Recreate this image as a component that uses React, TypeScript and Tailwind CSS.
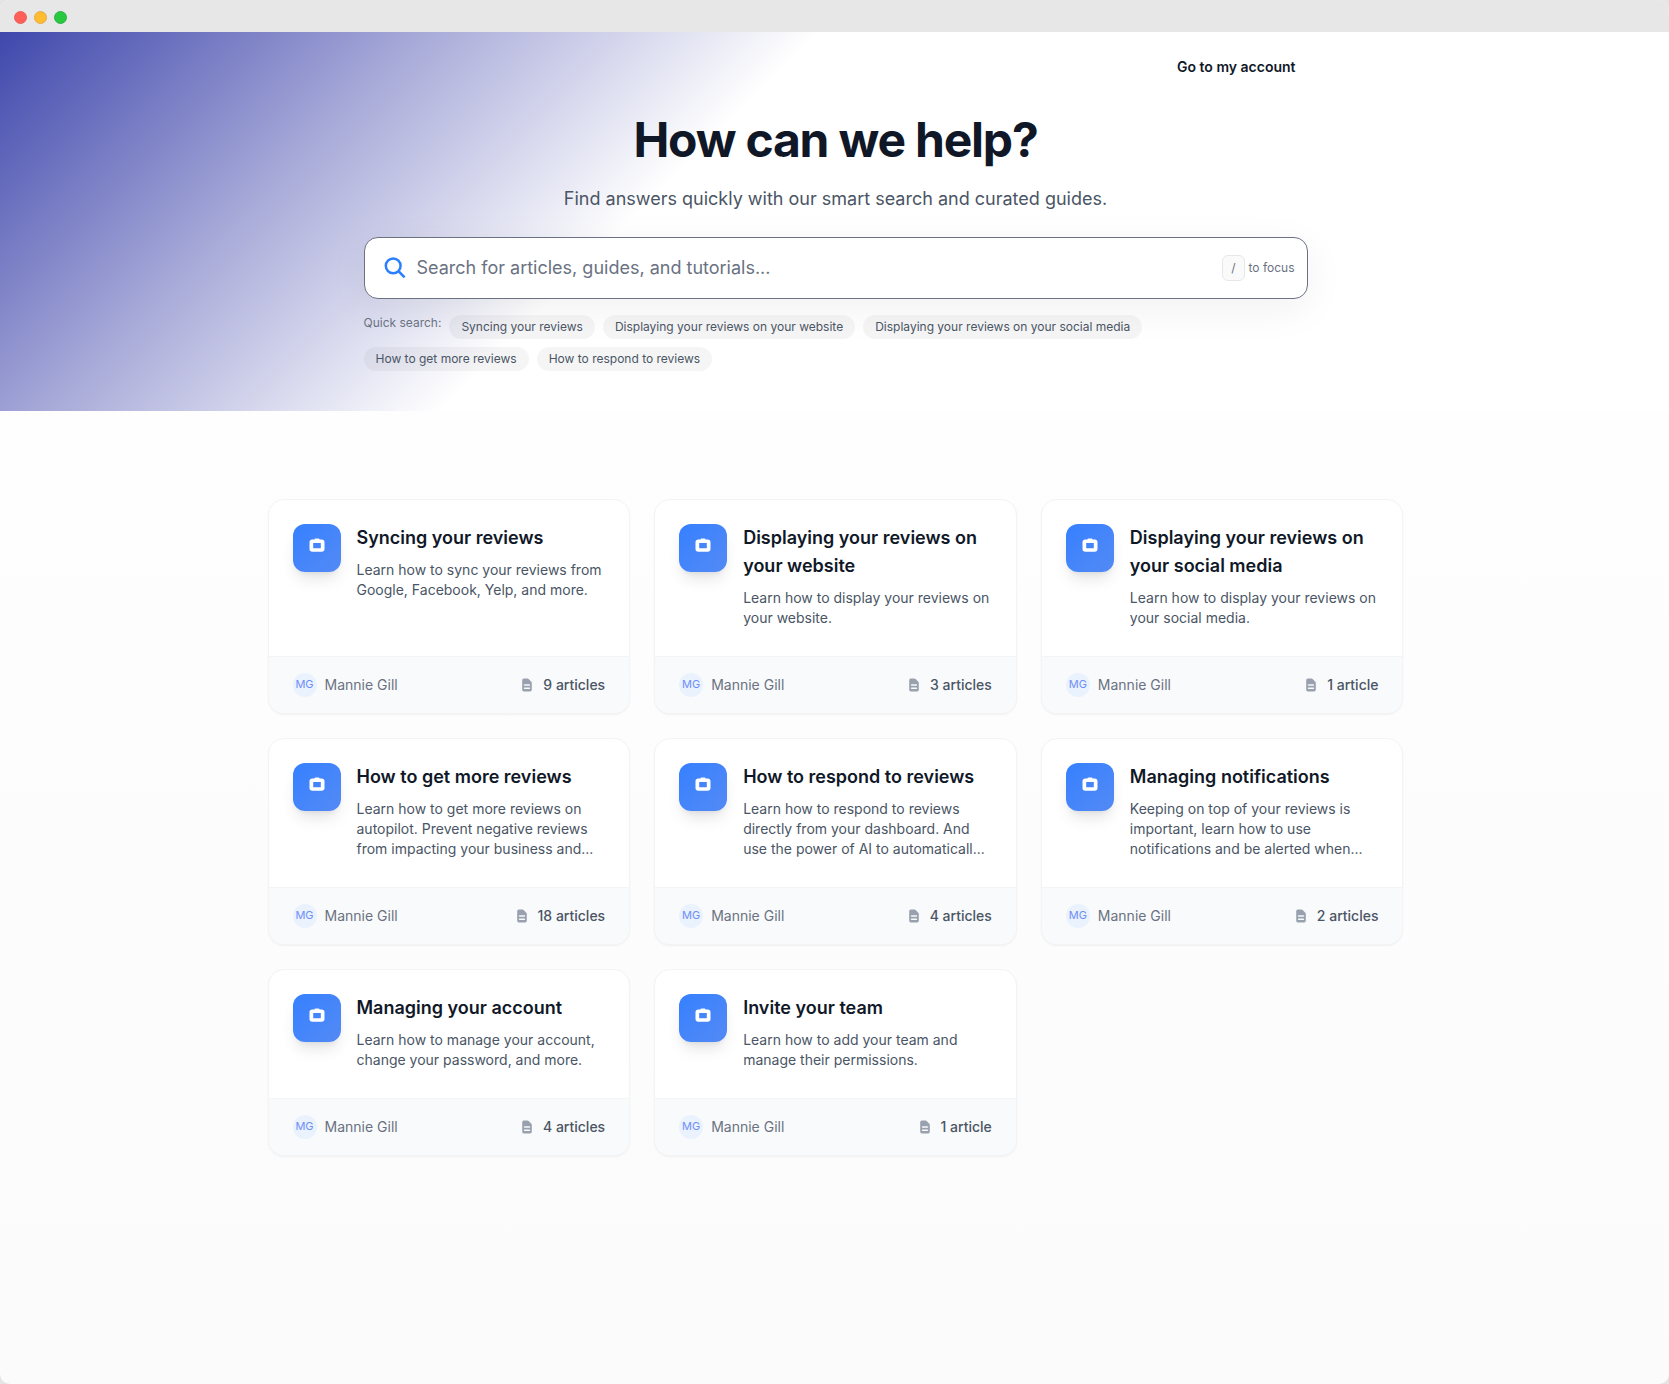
type Collection = {
  title: string
  description: string
  articles: number
}

const quickSearches = [
  "Syncing your reviews",
  "Displaying your reviews on your website",
  "Displaying your reviews on your social media",
  "How to get more reviews",
  "How to respond to reviews",
]

const collections: Collection[] = [
  {
    title: "Syncing your reviews",
    description: "Learn how to sync your reviews from Google, Facebook, Yelp, and more.",
    articles: 9,
  },
  {
    title: "Displaying your reviews on your website",
    description: "Learn how to display your reviews on your website.",
    articles: 3,
  },
  {
    title: "Displaying your reviews on your social media",
    description: "Learn how to display your reviews on your social media.",
    articles: 1,
  },
  {
    title: "How to get more reviews",
    description:
      "Learn how to get more reviews on autopilot. Prevent negative reviews from impacting your business and...",
    articles: 18,
  },
  {
    title: "How to respond to reviews",
    description:
      "Learn how to respond to reviews directly from your dashboard. And use the power of AI to automaticall...",
    articles: 4,
  },
  {
    title: "Managing notifications",
    description:
      "Keeping on top of your reviews is important, learn how to use notifications and be alerted when...",
    articles: 2,
  },
  {
    title: "Managing your account",
    description: "Learn how to manage your account, change your password, and more.",
    articles: 4,
  },
  {
    title: "Invite your team",
    description: "Learn how to add your team and manage their permissions.",
    articles: 1,
  },
]

function SearchIcon() {
  return (
    <svg
      viewBox="0 0 24 24"
      className="size-6 shrink-0 text-[#2b7fff]"
      fill="none"
      stroke="currentColor"
      strokeWidth="2.5"
      aria-hidden="true"
    >
      <circle cx="10.2" cy="9.8" r="7.4" />
      <path d="M15.3 15l6.3 6.3" />
    </svg>
  )
}

function CollectionIcon() {
  return (
    <svg viewBox="0 0 16 14" className="h-3.5 w-4 text-white" fill="currentColor" aria-hidden="true">
      <path
        fillRule="evenodd"
        d="M5.4 1.5C5.5.8 5.9.4 6.6.4h2.8c.7 0 1.1.4 1.2 1.1h2.2c1.6 0 2.7 1 2.7 2.7v6.9c0 1.7-1.1 2.7-2.7 2.7H3.2c-1.600 0-2.700-1-2.700-2.700V4.200c0-1.700 1.100-2.700 2.700-2.700h2.200zM4.200 5v5.200h7.600V5H4.200z"
      />
    </svg>
  )
}

function DocumentIcon() {
  return (
    <svg viewBox="0 0 20 20" className="size-4 text-gray-400" fill="currentColor" aria-hidden="true">
      <path
        fillRule="evenodd"
        d="M4 4a2 2 0 012-2h4.586A2 2 0 0112 2.586L15.414 6A2 2 0 0116 7.414V16a2 2 0 01-2 2H6a2 2 0 01-2-2V4zm2 6a1 1 0 011-1h6a1 1 0 110 2H7a1 1 0 01-1-1zm1 3a1 1 0 100 2h6a1 1 0 100-2H7z"
      />
    </svg>
  )
}

function TitleBar() {
  return (
    <div className="flex h-8 items-center gap-[7px] bg-[#e7e7e7] px-[14px] pt-0.5">
      <span className="size-[13px] rounded-full border border-[#e9605a] bg-[#ff5f57]" />
      <span className="size-[13px] rounded-full border border-[#e5aa45] bg-[#febc2e]" />
      <span className="size-[13px] rounded-full border border-[#2eb04a] bg-[#28c840]" />
    </div>
  )
}

function Hero() {
  return (
    <header className="bg-[linear-gradient(135deg,#3f48ac_0%,#a9abd9_21%,#ffffff_40%)] pb-10 pl-0.5">
      <div className="mx-auto max-w-[1024px] px-10">
        <nav className="flex justify-end px-3 pt-6">
          <a href="#account" className="text-sm leading-[22px] font-semibold text-gray-900">
            Go to my account
          </a>
        </nav>

        <h1 className="mt-9 text-center text-5xl leading-[52px] font-bold tracking-tight text-gray-900">
          How can we help?
        </h1>
        <p className="mt-[18px] text-center text-lg leading-[29px] text-gray-600">
          Find answers quickly with our smart search and curated guides.
        </p>

        <form
          className="mt-6 flex h-[62px] items-center rounded-[14px] border border-gray-500 bg-white pr-3 pl-[18px] shadow-[0_10px_40px_rgba(0,0,0,0.06)]"
          onSubmit={(e) => e.preventDefault()}
        >
          <label htmlFor="search" aria-label="Search">
            <SearchIcon />
          </label>
          <input
            id="search"
            type="search"
            placeholder="Search for articles, guides, and tutorials..."
            className="min-w-0 flex-1 px-[10px] text-lg text-gray-900 outline-none placeholder:text-gray-500"
          />
          <span className="flex items-center gap-1 text-xs text-gray-500">
            <kbd className="flex h-[26px] items-center rounded-md border border-gray-200 bg-[#fafafa] px-2 font-[Inter,sans-serif]">
              /
            </kbd>
            to focus
          </span>
        </form>

        <div className="mt-4 flex flex-wrap gap-2 text-xs">
          <span className="text-gray-500">Quick search:</span>
          {quickSearches.map((label) => (
            <button key={label} type="button" className="rounded-full bg-black/4 px-3 py-1 text-gray-600">
              {label}
            </button>
          ))}
        </div>
      </div>
    </header>
  )
}

function CollectionCard({ title, description, articles }: Collection) {
  return (
    <a
      href="#collection"
      className="flex flex-col overflow-hidden rounded-2xl border border-gray-100 bg-white shadow-xs"
    >
      <div className="flex flex-1 items-start gap-4 px-6 pt-6 pb-7">
        <div className="flex size-12 shrink-0 justify-center rounded-xl bg-linear-to-br from-[#3580ff] to-[#538af5] pt-[14px] shadow-lg shadow-black/10">
          <CollectionIcon />
        </div>
        <div className="min-w-0 flex-1">
          <h2 className="text-lg leading-7 font-semibold text-gray-900">{title}</h2>
          <p className="mt-2 text-sm leading-5 text-gray-600">{description}</p>
        </div>
      </div>
      <div className="flex items-center justify-between border-t border-gray-100 bg-[#f9fafb] px-6 py-4 text-sm">
        <span className="flex items-center gap-2 text-gray-500">
          <span className="flex size-6 items-center justify-center rounded-full bg-[#eaf2fe] text-[11px] text-[#6f8ff5]">
            MG
          </span>
          Mannie Gill
        </span>
        <span className="flex items-center gap-2 font-medium text-gray-600">
          <DocumentIcon />
          {articles} {articles === 1 ? "article" : "articles"}
        </span>
      </div>
    </a>
  )
}

export default function App() {
  return (
    <div className="min-h-screen bg-[#e4e4e4] font-[Inter,sans-serif]">
      <div className="flex min-h-screen flex-col overflow-hidden rounded-[10px] bg-linear-to-b from-white to-[#fbfbfb]">
        <TitleBar />
        <Hero />
        <div className="pl-0.5">
          <main className="mx-auto grid max-w-[1216px] grid-cols-3 gap-6 px-10 pt-[88px] pb-24">
            {collections.map((collection) => (
              <CollectionCard key={collection.title} {...collection} />
            ))}
          </main>
        </div>
      </div>
    </div>
  )
}
